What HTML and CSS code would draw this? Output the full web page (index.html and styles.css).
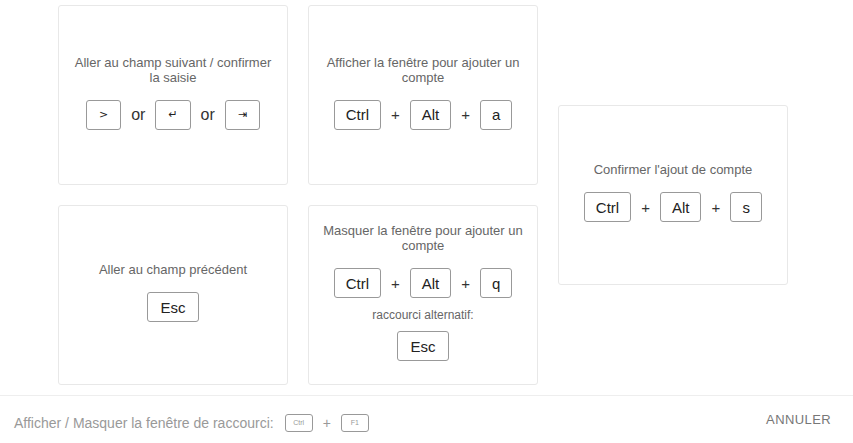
FILE: index.html
```html
<!DOCTYPE html>
<html lang="fr">
<head>
    <meta charset="UTF-8">
    <meta name="viewport" content="width=device-width, initial-scale=1.0">
    <title>Raccourcis clavier</title>
    <link rel="stylesheet" href="styles.css">
</head>
<body>

    <!-- Shortcut cards -->
    <div class="shortcuts">
        <div class="card">
            <p class="card-title">Aller au champ suivant / confirmer la saisie</p>
            <div class="keys">
                <span class="key key-glyph">&gt;</span>
                <span class="sep sep-or">or</span>
                <span class="key key-glyph">&#8629;</span>
                <span class="sep sep-or">or</span>
                <span class="key key-glyph">&#8677;</span>
            </div>
        </div>

        <div class="card">
            <p class="card-title">Afficher la fenêtre pour ajouter un compte</p>
            <div class="keys">
                <span class="key">Ctrl</span>
                <span class="sep">+</span>
                <span class="key">Alt</span>
                <span class="sep">+</span>
                <span class="key">a</span>
            </div>
        </div>

        <div class="card card-tall">
            <p class="card-title">Confirmer l'ajout de compte</p>
            <div class="keys">
                <span class="key">Ctrl</span>
                <span class="sep">+</span>
                <span class="key">Alt</span>
                <span class="sep">+</span>
                <span class="key">s</span>
            </div>
        </div>

        <div class="card">
            <p class="card-title">Aller au champ précédent</p>
            <div class="keys">
                <span class="key key-wide">Esc</span>
            </div>
        </div>

        <div class="card">
            <p class="card-title">Masquer la fenêtre pour ajouter un compte</p>
            <div class="keys">
                <span class="key">Ctrl</span>
                <span class="sep">+</span>
                <span class="key">Alt</span>
                <span class="sep">+</span>
                <span class="key">q</span>
            </div>
            <p class="alt-label">raccourci alternatif:</p>
            <div class="keys">
                <span class="key key-wide">Esc</span>
            </div>
        </div>
    </div>

    <!-- Footer -->
    <div class="footer">
        <div class="footer-hint">
            <span>Afficher / Masquer la fenêtre de raccourci:</span>
            <span class="mini-key">Ctrl</span>
            <span class="mini-sep">+</span>
            <span class="mini-key">F1</span>
        </div>
        <button class="cancel-button">Annuler</button>
    </div>

</body>
</html>
```

FILE: styles.css
```css
body {
    font-family: "Liberation Sans", Arial, sans-serif;
    background-color: #fff;
    margin: 0;
    padding: 0;
    color: #333;
}

/* Cards grid */
.shortcuts {
    display: grid;
    grid-template-columns: repeat(3, 230px);
    grid-template-rows: repeat(2, 180px);
    grid-auto-flow: column;
    gap: 20px;
    padding: 5px 0 0 58px;
}

.card {
    box-sizing: border-box;
    border: 1px solid #e8e8e8;
    border-radius: 3px;
    background-color: #fff;
    display: flex;
    flex-direction: column;
    justify-content: center;
    align-items: center;
    padding: 0 14px 6px;
    text-align: center;
}

.shortcuts .card:nth-child(1) { grid-column: 1; grid-row: 1; }
.shortcuts .card:nth-child(2) { grid-column: 2; grid-row: 1; }
.shortcuts .card:nth-child(4) { grid-column: 1; grid-row: 2; }
.shortcuts .card:nth-child(5) { grid-column: 2; grid-row: 2; }

.card-tall {
    grid-column: 3;
    grid-row: 1 / span 2;
    align-self: center;
    height: 180px;
}

.card-title {
    margin: 0 0 15px;
    font-size: 13px;
    line-height: 15px;
    color: #666;
}

.keys {
    display: flex;
    align-items: center;
    justify-content: center;
    gap: 10px;
}

.key {
    box-sizing: border-box;
    display: inline-flex;
    align-items: center;
    justify-content: center;
    height: 30px;
    min-width: 32px;
    padding: 0 11px;
    border: 1px solid #999;
    border-radius: 3px;
    font-size: 15px;
    color: #222;
}

.key-glyph {
    font-family: "DejaVu Sans", sans-serif;
    font-size: 11px;
    padding: 0 12px;
}

.key-wide {
    padding: 0 12px;
}

.sep {
    font-size: 15px;
    color: #333;
}

.sep-or {
    font-size: 16px;
}

.alt-label {
    margin: 10px 0 9px;
    font-size: 12px;
    color: #666;
}

/* Footer */
.footer {
    margin-top: 10px;
    border-top: 1px solid #eee;
    height: 47px;
    display: flex;
    align-items: center;
    justify-content: space-between;
    padding: 0 22px 0 14px;
}

.footer-hint {
    display: flex;
    align-items: center;
    gap: 11px;
    font-size: 14px;
    color: #999;
    padding-top: 6px;
}

.mini-key {
    box-sizing: border-box;
    display: inline-flex;
    align-items: center;
    justify-content: center;
    width: 28px;
    height: 18px;
    border: 1px solid #999;
    border-radius: 3px;
    font-size: 7px;
    color: #999;
}

.mini-sep {
    font-size: 14px;
    color: #999;
    margin: 0 -1px;
}

.cancel-button {
    background: none;
    border: none;
    padding: 0;
    font-family: "Liberation Sans", Arial, sans-serif;
    font-size: 13px;
    letter-spacing: 0.4px;
    text-transform: uppercase;
    color: #777;
    cursor: pointer;
}
```
